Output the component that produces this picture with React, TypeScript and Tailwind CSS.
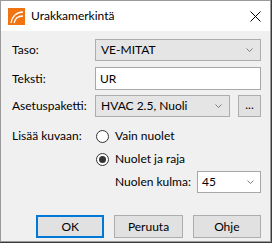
import { useState } from "react";

function Chevron() {
  return (
    <svg width="7" height="4" viewBox="0 0 7 4" className="shrink-0">
      <path d="M0.5 0.5 L3.5 3.5 L6.5 0.5" fill="none" stroke="#707070" strokeWidth="0.9" />
    </svg>
  );
}

function Radio({ checked, label, onClick }: any) {
  return (
    <div className="flex items-center h-[16px] cursor-default" onClick={onClick}>
      <div className="w-[13px] h-[13px] rounded-full border border-[#333333] bg-white flex items-center justify-center">
        {checked && <div className="w-[7px] h-[7px] rounded-full bg-[#333333]" />}
      </div>
      <span className="ml-[6px]">{label}</span>
    </div>
  );
}

export default function App() {
  const [mode, setMode] = useState(1);

  return (
    <div className="w-[272px] h-[243px] bg-[#3a3a3a] font-['Lato',sans-serif] text-[12px] text-black">
      <div className="w-[271px] h-[242px] border border-[#9a9a9a] bg-[#f0f0f0] flex flex-col">
        {/* title bar */}
        <div className="h-[30px] bg-white flex items-center shrink-0">
          <svg width="17" height="17" viewBox="0 0 17 17" className="ml-[7px]">
            <rect width="17" height="17" fill="#f07412" />
            <path d="M3 15 C4 8 9 4 15 4" fill="none" stroke="#fff" strokeWidth="1.3" />
            <path d="M6 15 C7 10 10 8 15 8" fill="none" stroke="#fff" strokeWidth="1.3" />
          </svg>
          <span className="ml-[6px]">Urakkamerkintä</span>
          <svg width="11" height="11" viewBox="0 0 11 11" className="ml-auto mr-[9px]">
            <path d="M0.5 0.5 L10.5 10.5 M10.5 0.5 L0.5 10.5" stroke="#000" strokeWidth="1" />
          </svg>
        </div>

        {/* content */}
        <div className="flex flex-col pl-[11px] pr-[9px] pt-[8px]">
          <div className="flex items-center h-[22px]">
            <span className="w-[83px]">Taso:</span>
            <div className="flex-1 h-[22px] bg-[#e5e5e5] border border-[#adadad] flex items-center pl-[5px] pr-[7px]">
              <span className="flex-1">VE-MITAT</span>
              <Chevron />
            </div>
          </div>

          <div className="flex items-center h-[23px] mt-[6px]">
            <span className="w-[83px]">Teksti:</span>
            <div className="flex-1 h-[23px] bg-white border border-[#a8a8a8] flex items-center pl-[4px]">
              UR
            </div>
          </div>

          <div className="flex items-center h-[22px] mt-[5px]">
            <span className="w-[83px]">Asetuspaketti:</span>
            <div className="w-[135px] h-[22px] bg-[#e5e5e5] border border-[#adadad] flex items-center pl-[5px] pr-[7px]">
              <span className="flex-1">HVAC 2.5, Nuoli</span>
              <Chevron />
            </div>
            <div className="ml-auto w-[23px] h-[22px] bg-[#e1e1e1] border border-[#adadad] flex items-center justify-center leading-none pb-[2px]">
              ...
            </div>
          </div>

          <div className="flex mt-[11px]">
            <span className="w-[84px] h-[16px] flex items-center">Lisää kuvaan:</span>
            <div className="flex flex-col gap-[7px]">
              <Radio checked={mode === 0} label="Vain nuolet" onClick={() => setMode(0)} />
              <Radio checked={mode === 1} label="Nuolet ja raja" onClick={() => setMode(1)} />
            </div>
          </div>

          <div className="flex items-center h-[22px] mt-[4px] pl-[103px]">
            <span className="flex-1">Nuolen kulma:</span>
            <div className="w-[64px] h-[22px] bg-white border border-[#a8a8a8] flex items-center pl-[4px] pr-[6px]">
              <span className="flex-1">45</span>
              <Chevron />
            </div>
          </div>

          <div className="flex gap-[10px] mt-[22px] ml-[24px]">
            <div className="w-[70px] h-[23px] bg-[#e1e1e1] border-2 border-[#0078d7] flex items-center justify-center">
              OK
            </div>
            <div className="w-[70px] h-[23px] bg-[#e1e1e1] border border-[#adadad] flex items-center justify-center">
              Peruuta
            </div>
            <div className="w-[70px] h-[23px] bg-[#e1e1e1] border border-[#adadad] flex items-center justify-center">
              Ohje
            </div>
          </div>
        </div>
      </div>
    </div>
  );
}
